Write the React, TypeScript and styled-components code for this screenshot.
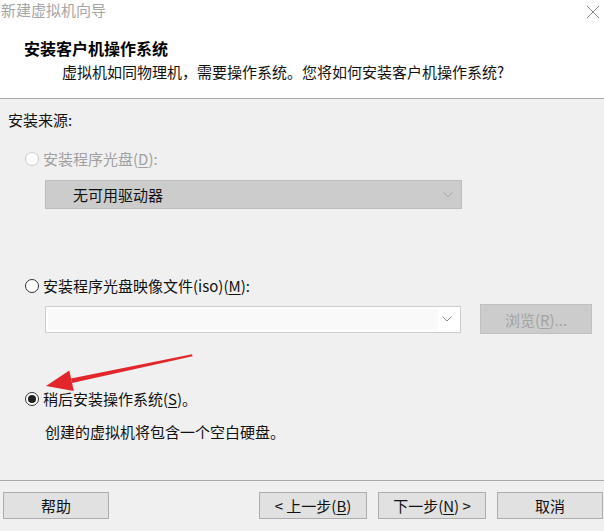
import React from "react";
import styled, { createGlobalStyle } from "styled-components";

const Global = createGlobalStyle`
  html, body { margin: 0; padding: 0; background: #f0f0f0; }
  body { font-family: "Noto Sans CJK SC", "Noto Sans", sans-serif; color: #111; }
  * { box-sizing: border-box; }
`;

const Window = styled.div`
  position: relative;
  width: 604px;
  height: 531px;
  display: flex;
  flex-direction: column;
  background: #f0f0f0;
  overflow: hidden;
`;

const Header = styled.header`
  height: 99px;
  background: #fff;
  border-bottom: 1px solid #a9a9a9;
  display: flex;
  flex-direction: column;
`;

const TitleBar = styled.div`
  height: 20px;
  display: flex;
  align-items: center;
  justify-content: space-between;
  padding: 0 4px 0 1px;
`;

const WindowTitle = styled.span`
  font-size: 15px;
  line-height: 20px;
  color: #a5a5a5;
`;

const CloseIcon = styled.svg`
  width: 14px;
  height: 14px;
  margin-top: 4px;
`;

const Heading = styled.h1`
  margin: 18px 0 0 24px;
  font-size: 16px;
  line-height: 20px;
  font-weight: 700;
  color: #000;
`;

const Subtitle = styled.p`
  margin: 4px 0 0 62px;
  font-size: 15px;
  line-height: 20px;
  color: #111;
`;

const Body = styled.main`
  flex: 1;
  display: flex;
  flex-direction: column;
  padding: 11px 0 0 8px;
`;

const Label = styled.div<{ $indent?: number; $mt?: number }>`
  font-size: 15px;
  line-height: 20px;
  margin-left: ${(p) => p.$indent ?? 0}px;
  margin-top: ${(p) => p.$mt ?? 0}px;
  color: #111;
`;

const RadioRow = styled.div<{ $mt: number; $disabled?: boolean }>`
  display: flex;
  align-items: center;
  gap: 4px;
  margin: ${(p) => p.$mt}px 0 0 17px;
  font-size: 15px;
  line-height: 20px;
  color: ${(p) => (p.$disabled ? "#a0a0a0" : "#111")};
`;

const RadioDot = styled.span<{ $checked?: boolean; $disabled?: boolean }>`
  width: 14px;
  height: 14px;
  border-radius: 50%;
  border: 1px solid ${(p) => (p.$disabled ? "#cbcbcb" : "#333")};
  background: #fff;
  display: flex;
  align-items: center;
  justify-content: center;
  &::after {
    content: "";
    display: ${(p) => (p.$checked ? "block" : "none")};
    width: 8px;
    height: 8px;
    border-radius: 50%;
    background: #222;
  }
`;

const Key = styled.span`
  text-decoration: underline;
  text-underline-offset: 2px;
`;

const Select = styled.div<{ $disabled?: boolean }>`
  width: 417px;
  height: 29px;
  margin: 11px 0 0 37px;
  display: flex;
  align-items: center;
  justify-content: space-between;
  padding: 0 8px 0 27px;
  background: ${(p) => (p.$disabled ? "#cccccc" : "#fff")};
  border: 1px solid ${(p) => (p.$disabled ? "#bdbdbd" : "#cdcdcd")};
  font-size: 15px;
  color: #111;
`;

const IsoRow = styled.div`
  display: flex;
  align-items: center;
  margin: 8px 0 0 37px;
  height: 30px;
`;

const Combo = styled.div`
  width: 416px;
  height: 27px;
  display: flex;
  align-items: center;
  justify-content: space-between;
  padding: 2px 8px 2px 2px;
  background: #fff;
  border: 1px solid #cdcdcd;
`;

const ComboEdit = styled.div`
  flex: 0 0 390px;
  height: 100%;
  background: #f9f9f9;
`;

const Chevron = styled.svg`
  width: 10px;
  height: 6px;
`;

const BrowseButton = styled.div`
  margin-left: 19px;
  width: 112px;
  height: 30px;
  display: flex;
  align-items: center;
  justify-content: center;
  background: #cccccc;
  border: 1px solid #c0c0c0;
  color: #a3a3a3;
  font-size: 15px;
`;

const Footer = styled.footer`
  height: 51px;
  border-top: 1px solid #a9a9a9;
  display: flex;
  align-items: flex-start;
  padding: 11px 1px 0 3px;
`;

const ButtonGroup = styled.div`
  margin-left: auto;
  display: flex;
  gap: 11px;
`;

const Button = styled.div<{ $w: number }>`
  width: ${(p) => p.$w}px;
  height: 27px;
  display: flex;
  align-items: center;
  justify-content: center;
  background: #e1e1e1;
  border: 1px solid #adadad;
  font-size: 15px;
  color: #111;
  white-space: pre;
`;

const ArrowLayer = styled.svg`
  position: absolute;
  left: 0;
  top: 0;
  pointer-events: none;
`;

const ChevronDown = ({ color }: { color: string }) => (
  <Chevron viewBox="0 0 10 6">
    <path d="M0.5 0.5 L5 5 L9.5 0.5" fill="none" stroke={color} strokeWidth="1" />
  </Chevron>
);

export default function App() {
  return (
    <>
      <Global />
      <Window>
        <Header>
          <TitleBar>
            <WindowTitle>新建虚拟机向导</WindowTitle>
            <CloseIcon viewBox="0 0 14 14">
              <path d="M1 1 L13 13 M13 1 L1 13" stroke="#8a8a8a" strokeWidth="1" />
            </CloseIcon>
          </TitleBar>
          <Heading>安装客户机操作系统</Heading>
          <Subtitle>虚拟机如同物理机，需要操作系统。您将如何安装客户机操作系统?</Subtitle>
        </Header>
        <Body>
          <Label>安装来源:</Label>
          <RadioRow $mt={19} $disabled>
            <RadioDot $disabled />
            <span>
              安装程序光盘(<Key>D</Key>):
            </span>
          </RadioRow>
          <Select $disabled>
            <span>无可用驱动器</span>
            <ChevronDown color="#a8a8a8" />
          </Select>
          <RadioRow $mt={67}>
            <RadioDot />
            <span>
              安装程序光盘映像文件(iso)(<Key>M</Key>):
            </span>
          </RadioRow>
          <IsoRow>
            <Combo>
              <ComboEdit />
              <ChevronDown color="#8a8a8a" />
            </Combo>
            <BrowseButton>
              浏览(<Key>R</Key>)...
            </BrowseButton>
          </IsoRow>
          <RadioRow $mt={55}>
            <RadioDot $checked />
            <span>
              稍后安装操作系统(<Key>S</Key>)。
            </span>
          </RadioRow>
          <Label $indent={37} $mt={13}>
            创建的虚拟机将包含一个空白硬盘。
          </Label>
        </Body>
        <Footer>
          <Button $w={106}>帮助</Button>
          <ButtonGroup>
            <Button $w={108}>
              {"< 上一步("}
              <Key>B</Key>
              {")"}
            </Button>
            <Button $w={108}>
              {"下一步("}
              <Key>N</Key>
              {") >"}
            </Button>
            <Button $w={106}>取消</Button>
          </ButtonGroup>
        </Footer>
        <ArrowLayer width="604" height="531" viewBox="0 0 604 531">
          <polygon points="71,378.5 192,354.2 192.6,356.2 72,383" fill="#e3262b" />
          <polygon points="46,386 69.3,370.6 73.8,391" fill="#e3262b" />
        </ArrowLayer>
      </Window>
    </>
  );
}
